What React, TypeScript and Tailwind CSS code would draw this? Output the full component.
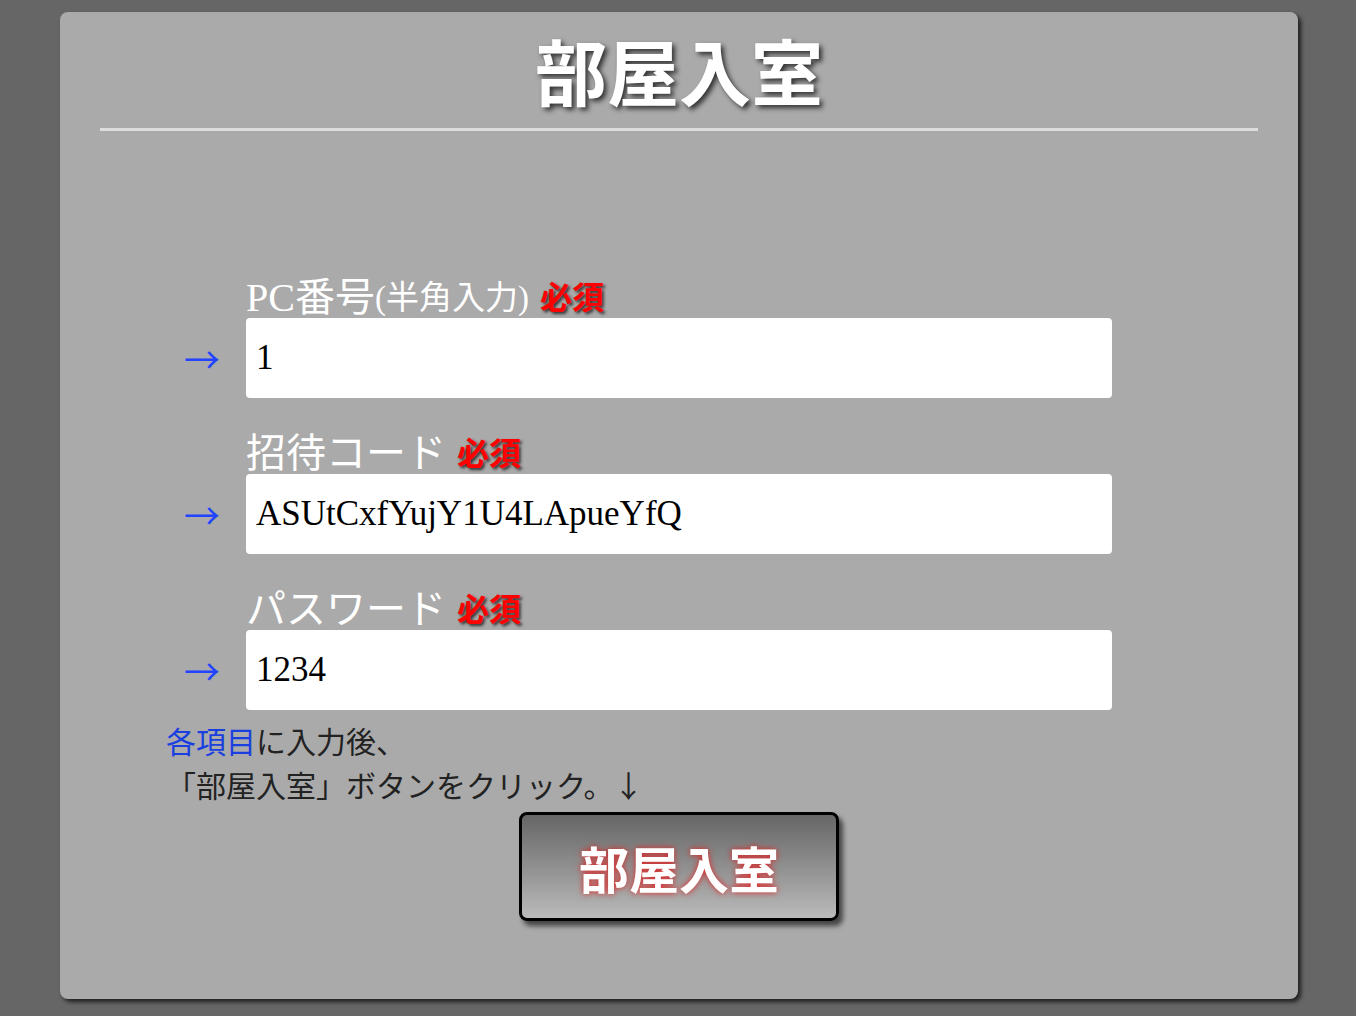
import React from "react";

const serif = "font-['Liberation_Serif','Noto_Sans_CJK_JP',serif]";
const sans = "font-['Noto_Sans_CJK_JP','Liberation_Sans',sans-serif]";

type Field = {
  id: string;
  label: string;
  sub?: string;
  value: string;
};

const fields: Field[] = [
  { id: "pc", label: "PC番号", sub: "(半角入力)", value: "1" },
  { id: "code", label: "招待コード", value: "ASUtCxfYujY1U4LApueYfQ" },
  { id: "pass", label: "パスワード", value: "1234" },
];

function Required() {
  return (
    <span className="ml-[11px] text-[32px] font-bold text-[#ff0000] [text-shadow:2px_2px_3px_#333]">
      必須
    </span>
  );
}

export default function App() {
  return (
    <div className={`min-h-[1016px] bg-[#666666] pt-3 pl-[60px] pr-[58px] pb-[18px] ${serif}`}>
      <div className="rounded-lg bg-[#aaaaaa] px-10 pt-6 pb-[78px] shadow-[3px_3px_4px_rgba(0,0,0,0.7)]">
        <h1 className="text-center text-[72px] leading-[80px] font-semibold text-white [text-shadow:3px_3px_5px_#333]">
          部屋入室
        </h1>
        <div className="mt-3 h-[3px] bg-[#dddddd]" />

        <div className="ml-[66px] mt-[147px] w-[946px]">
          {fields.map((f, i) => (
            <div key={f.id} className={i > 0 ? "mt-9" : ""}>
              <div className="ml-20 flex items-end h-10 leading-10 text-white">
                <span className="text-[40px]">{f.label}</span>
                {f.sub && <span className="text-[33px]">{f.sub}</span>}
                <Required />
              </div>
              <div className="flex items-center">
                <div className={`w-20 pl-[18px] text-[36px] leading-none text-[#2244ff] ${sans}`}>→</div>
                <input
                  readOnly
                  value={f.value}
                  className={`h-20 w-[866px] rounded bg-white px-[10px] text-[35px] text-black outline-none ${serif}`}
                />
              </div>
            </div>
          ))}

          <p className={`mt-2 text-[30px] leading-[44px] text-[#222] ${sans}`}>
            <span className="text-[#1a3fe0]">各項目</span>に入力後、
            <br />
            「部屋入室」ボタンをクリック。↓
          </p>
        </div>

        <div className="mt-[6px] flex justify-center">
          <button className="h-[109px] w-[320px] rounded-lg border-[3px] border-black bg-gradient-to-b from-[#666666] to-[#bbbbbb] pt-3 text-[50px] font-semibold text-white shadow-[4px_5px_5px_rgba(0,0,0,0.6)] [text-shadow:0_0_6px_#e02020]">
            部屋入室
          </button>
        </div>
      </div>
    </div>
  );
}
